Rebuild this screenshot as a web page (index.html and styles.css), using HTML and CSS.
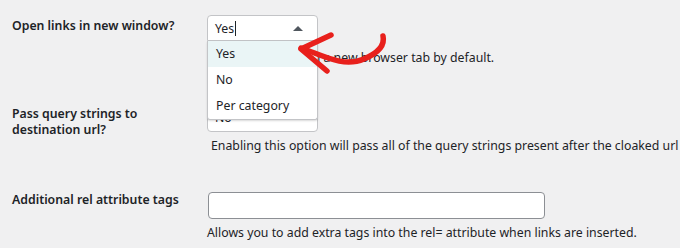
FILE: index.html
```html
<!DOCTYPE html>
<html>
<head>
<meta charset="utf-8">
<link rel="stylesheet" href="styles.css">
</head>
<body>
<div class="page">
  <div class="row r1">
    <div class="label">Open links in new window?</div>
    <div class="field">
      <div class="select is-open"><span class="val">Yes</span><span class="cursor"></span><span class="tri"></span></div>
      <p class="desc d1">Opens the links in a new browser tab by default.</p>
      <ul class="dropdown">
        <li class="hl">Yes</li>
        <li>No</li>
        <li>Per category</li>
      </ul>
    </div>
  </div>
  <div class="row r2">
    <div class="label">Pass query strings to<br>destination url?</div>
    <div class="field">
      <div class="select s2"><span class="val">No</span></div>
      <p class="desc d2">Enabling this option will pass all of the query strings present after the cloaked url</p>
    </div>
  </div>
  <div class="row r3">
    <div class="label">Additional rel attribute tags</div>
    <div class="field">
      <div class="input"></div>
      <p class="desc d3">Allows you to add extra tags into the rel= attribute when links are inserted.</p>
    </div>
  </div>
  <svg class="arrow" width="100" height="50" viewBox="290 28 100 50">
    <path d="M301,48 C322,55 343,68 364,59 C378,53 385,45 383,36" fill="none" stroke="#e8201c" stroke-width="5.5" stroke-linecap="round"/>
    <path d="M331,35 L301,49 L327,71" fill="none" stroke="#e8201c" stroke-width="5.5" stroke-linecap="round" stroke-linejoin="round"/>
  </svg>
</div>
</body>
</html>
```

FILE: styles.css
```css
html, body {
  margin: 0;
  padding: 0;
  background: #f0f0f1;
}
.page {
  position: relative;
  width: 680px;
  height: 248px;
  overflow: hidden;
  font-family: "Noto Sans", "Open Sans", sans-serif;
  color: #1d2327;
  font-size: 12.3px;
}
.row {
  display: flex;
}
.label {
  width: 195px;
  padding-left: 12px;
  font-weight: 600;
  font-size: 12.3px;
  flex: none;
}
.field {
  position: relative;
  flex: 1;
}
.r1 {
  padding-top: 15px;
  position: relative;
  z-index: 2;
}
.r1 .label {
  line-height: 20px;
  margin-top: 1px;
}
.select {
  box-sizing: border-box;
  width: 111px;
  height: 26px;
  border: 1px solid #c3c4c7;
  border-radius: 4px;
  background: #fff;
  display: flex;
  align-items: center;
  padding-left: 7px;
  position: relative;
  font-size: 12.3px;
}
.select.is-open {
  border-bottom-left-radius: 0;
  border-bottom-right-radius: 0;
}
.cursor {
  display: inline-block;
  width: 1px;
  height: 15px;
  background: #1d2327;
  margin-left: 1px;
}
.tri {
  position: absolute;
  right: 14px;
  top: 10px;
  width: 0;
  height: 0;
  border-left: 5px solid transparent;
  border-right: 5px solid transparent;
  border-bottom: 5px solid #50575e;
}
.desc {
  margin: 0;
  font-size: 12.3px;
  line-height: 18px;
  padding-left: 4px;
  white-space: nowrap;
}
.d1 {
  margin-top: 8px;
  padding-left: 10px;
}
.dropdown {
  position: absolute;
  left: 0;
  top: 26px;
  width: 111px;
  box-sizing: border-box;
  margin: 0;
  padding: 0;
  list-style: none;
  background: #fff;
  border: 1px solid #c3c4c7;
  border-top: none;
  box-shadow: 0 1px 2px rgba(0,0,0,0.15);
  border-radius: 0 0 3px 3px;
}
.dropdown li {
  height: 26px;
  line-height: 26px;
  padding-left: 8px;
}
.dropdown li.hl {
  background: #eaf5f6;
}
.r2 {
  padding-top: 35px;
}
.r2 .label {
  line-height: 16px;
  padding-top: 4px;
}
.s2 {
  height: 30px;
}
.d2 {
  margin-top: 5px;
}
.r3 {
  padding-top: 37px;
}
.r3 .label {
  line-height: 20px;
  margin-top: -2px;
}
.input {
  box-sizing: border-box;
  width: 337px;
  height: 27px;
  border: 1px solid #8c8f94;
  border-radius: 4px;
  background: #fff;
  margin-left: 1px;
}
.d3 {
  margin-top: 5px;
  padding-left: 0;
}
.arrow {
  position: absolute;
  left: 290px;
  top: 28px;
  z-index: 3;
}
```
